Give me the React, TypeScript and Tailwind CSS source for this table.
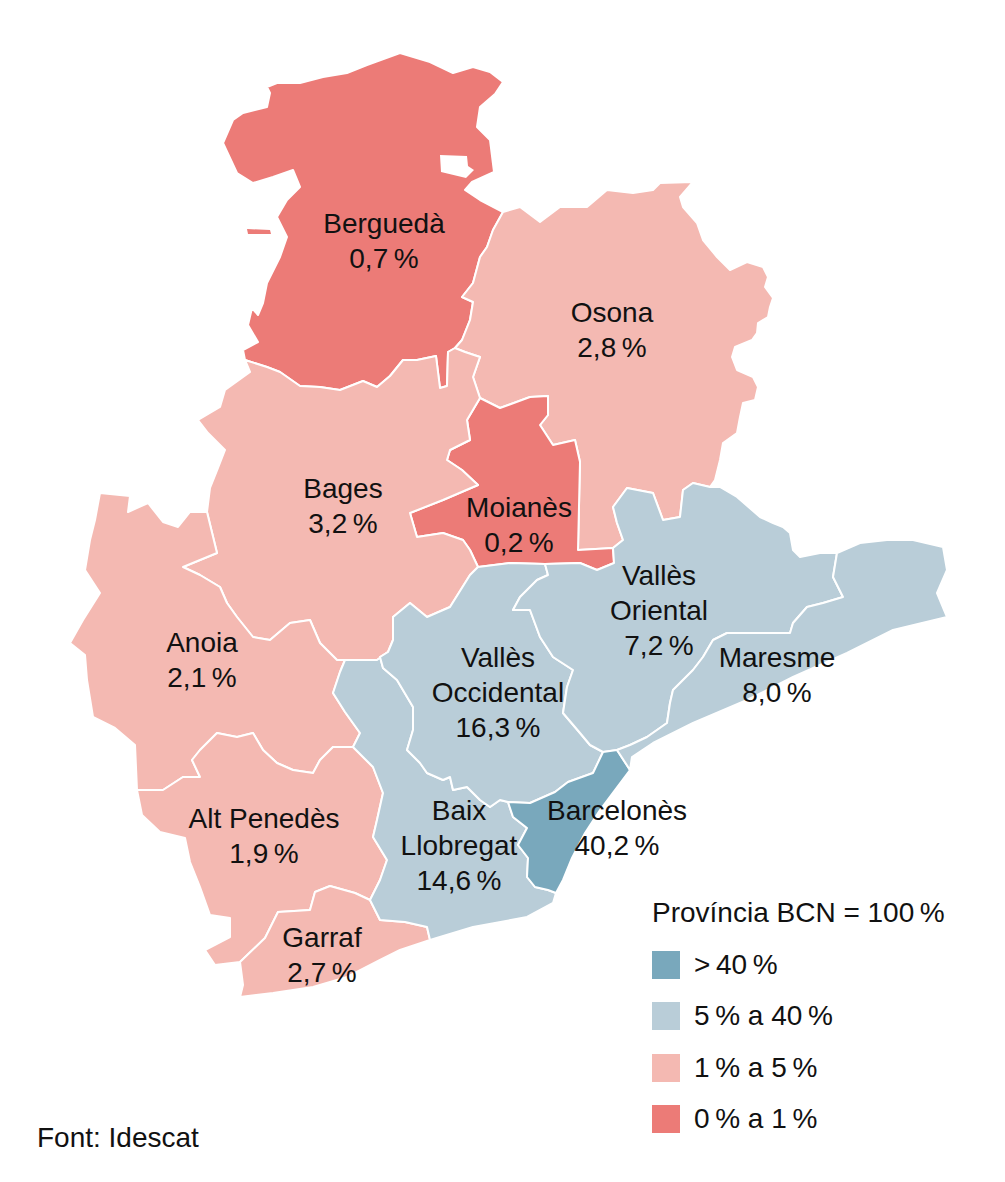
type P = [number, number];

const rev = (s: P[]) => [...s].reverse();
const join = (...segs: P[][]) => {
  const out: P[] = [];
  segs.forEach((s) =>
    s.forEach((p, i) => {
      const last = out[out.length - 1];
      if (i === 0 && last && last[0] === p[0] && last[1] === p[1]) return;
      out.push(p);
    })
  );
  return out.map((p) => p.join(",")).join(" ");
};

// boundary segments between comarques (shared so borders line up)
const BE_OUT: P[] = [[245,360],[243,350],[258,342],[248,325],[252,308],[258,315],[263,303],[267,283],[280,257],[287,237],[277,217],[287,200],[300,187],[293,170],[273,177],[253,183],[237,173],[223,143],[233,120],[243,113],[267,107],[270,93],[267,87],[277,83],[300,83],[323,77],[347,73],[367,65],[400,53],[430,62],[453,73],[473,67],[490,72],[503,82],[495,94],[480,107],[477,127],[490,140],[494,172],[472,182],[465,190],[480,200],[503,212]];
const B_O: P[] = [[503,212],[493,230],[487,247],[480,257],[473,283],[462,297],[473,302],[470,320],[462,340],[455,348]];
const BE_BA: P[] = [[455,348],[448,352],[447,386],[440,388],[436,356],[417,360],[403,360],[390,376],[377,387],[363,381],[340,390],[320,387],[300,386],[280,372],[267,367],[245,360]];
const OS_OUT: P[] = [[503,212],[520,207],[540,222],[560,207],[587,207],[607,190],[633,193],[653,190],[660,183],[693,182],[680,197],[683,207],[697,223],[703,240],[717,257],[730,270],[747,262],[763,267],[768,277],[765,287],[773,298],[770,307],[768,317],[758,323],[757,333],[752,340],[735,347],[732,357],[737,370],[753,377],[758,387],[755,400],[743,403],[740,417],[737,433],[723,443],[720,460],[715,480],[710,487]];
const O_VOR: P[] = [[710,487],[693,483],[683,490],[680,517],[663,520],[653,493],[627,488],[613,507],[617,523],[623,540],[613,548]];
const O_BA: P[] = [[455,348],[465,352],[480,357],[473,377],[480,398]];
const MO_OS: P[] = [[480,398],[500,408],[530,397],[548,396],[548,415],[540,425],[553,445],[575,440],[580,462],[578,550],[613,548]];
const MO_VOR: P[] = [[613,548],[614,563],[597,570],[580,563],[545,564]];
const MO_VOCC: P[] = [[545,564],[510,563],[478,567]];
const MO_BA: P[] = [[478,567],[470,550],[463,540],[443,533],[417,537],[410,513],[443,500],[478,485],[462,470],[447,460],[450,450],[470,440],[467,420],[480,398]];
const BA_VOCC: P[] = [[478,567],[470,575],[450,607],[427,617],[410,603],[393,617],[393,640],[388,652]];
const BA_BL: P[] = [[388,652],[377,660],[345,660]];
const BA_AN: P[] = [[345,660],[337,660],[327,650],[320,643],[310,620],[290,623],[270,640],[253,637],[237,617],[227,603],[220,587],[200,575],[183,567],[217,553],[207,512]];
const BA_OUT: P[] = [[207,512],[210,488],[218,468],[225,450],[208,433],[198,420],[220,407],[225,390],[250,372],[245,360]];
const AN_OUT: P[] = [[207,512],[190,512],[178,527],[163,522],[148,503],[128,512],[130,496],[100,493],[95,520],[90,540],[85,570],[100,593],[83,620],[70,643],[85,655],[87,680],[93,717],[115,728],[135,745],[137,790]];
const AN_ALTP: P[] = [[137,790],[163,790],[183,777],[200,777],[192,760],[200,750],[217,733],[237,737],[253,733],[263,750],[277,763],[293,770],[313,773],[320,760],[333,747],[353,747]];
const AN_BL: P[] = [[353,747],[360,733],[345,712],[333,693],[340,672],[345,660]];
const ALTP_BL: P[] = [[353,747],[373,767],[383,793],[377,820],[373,837],[387,860],[380,880],[370,900]];
const ALTP_GAR: P[] = [[370,900],[355,893],[330,886],[315,892],[310,910],[278,912],[265,938],[240,962]];
const ALTP_OUT: P[] = [[240,962],[215,965],[205,950],[230,937],[230,918],[210,915],[200,887],[190,862],[185,838],[160,832],[142,815],[137,790]];
const GAR_BL: P[] = [[370,900],[380,920],[405,922],[427,927],[430,940]];
const GAR_COAST: P[] = [[430,940],[400,950],[380,960],[347,977],[313,987],[273,993],[240,997],[243,985],[240,962]];
const BL_COAST: P[] = [[430,940],[473,927],[527,917],[553,903],[556,893]];
const BL_BARC: P[] = [[556,893],[548,890],[535,887],[527,877],[528,858],[518,845],[527,828],[513,817],[508,802]];
const BL_VOCC: P[] = [[508,802],[500,800],[490,807],[480,800],[467,787],[453,790],[450,777],[443,780],[427,773],[420,763],[407,750],[413,730],[413,707],[397,680],[383,668],[380,657],[388,652]];
const BARC_VOCC: P[] = [[508,802],[530,803],[555,792],[568,782],[593,773],[603,752]];
const VOCC_VOR: P[] = [[545,564],[548,575],[537,580],[520,597],[513,610],[530,610],[540,637],[553,657],[573,670],[567,687],[563,713],[580,733],[590,745],[603,752]];
const BARC_VOR: P[] = [[603,752],[617,750]];
const VOR_OUT: P[] = [[710,487],[720,487],[737,497],[760,517],[773,523],[783,527],[790,533],[793,550],[800,557],[820,553],[837,553]];
const VOR_MAR: P[] = [[837,553],[833,577],[843,597],[823,603],[807,607],[793,623],[790,633],[767,633],[747,633],[727,633],[713,640],[703,657],[693,670],[673,690],[670,703],[667,723],[647,737],[630,745],[617,750]];
const MAR_OUT: P[] = [[837,553],[860,543],[887,540],[913,540],[943,547],[947,570],[937,593],[947,617],[893,630],[847,653],[793,677],[747,700],[693,723],[653,743],[632,757],[630,770]];
const BARC_MAR: P[] = [[617,750],[630,770]];
const BARC_COAST: P[] = [[630,770],[615,790],[600,810],[585,833],[572,858],[563,880],[556,893]];

const DARK_RED = "#ec7b77";
const PINK = "#f4b9b2";
const LIGHT_BLUE = "#b9cdd8";
const DARK_BLUE = "#79a8bc";

const regions = [
  { name: "Berguedà", fill: DARK_RED, points: join(BE_OUT, B_O, BE_BA) },
  { name: "Osona", fill: PINK, points: join(OS_OUT, O_VOR, rev(MO_OS), rev(O_BA), rev(B_O)) },
  { name: "Moianès", fill: DARK_RED, points: join(MO_OS, MO_VOR, MO_VOCC, MO_BA) },
  { name: "Bages", fill: PINK, points: join(rev(BE_BA), O_BA, rev(MO_BA), BA_VOCC, BA_BL, BA_AN, BA_OUT) },
  { name: "Anoia", fill: PINK, points: join(AN_OUT, AN_ALTP, AN_BL, BA_AN) },
  { name: "Alt Penedès", fill: PINK, points: join(ALTP_BL, ALTP_GAR, ALTP_OUT, AN_ALTP) },
  { name: "Garraf", fill: PINK, points: join(GAR_BL, GAR_COAST, rev(ALTP_GAR)) },
  { name: "Baix Llobregat", fill: LIGHT_BLUE, points: join(rev(BA_BL), rev(BL_VOCC), rev(BL_BARC), rev(BL_COAST), rev(GAR_BL), rev(ALTP_BL), AN_BL) },
  { name: "Vallès Occidental", fill: LIGHT_BLUE, points: join(rev(MO_VOCC), VOCC_VOR, rev(BARC_VOCC), BL_VOCC, rev(BA_VOCC)) },
  { name: "Vallès Oriental", fill: LIGHT_BLUE, points: join(rev(O_VOR), VOR_OUT, VOR_MAR, rev(BARC_VOR), rev(VOCC_VOR), rev(MO_VOR)) },
  { name: "Barcelonès", fill: DARK_BLUE, points: join(BARC_VOCC, BARC_VOR, BARC_MAR, BARC_COAST, BL_BARC) },
  { name: "Maresme", fill: LIGHT_BLUE, points: join(MAR_OUT, rev(BARC_MAR), rev(VOR_MAR)) },
];

const labels: { x: number; y: number; lines: string[] }[] = [
  { x: 384, y: 233, lines: ["Berguedà", "0,7\u202F%"] },
  { x: 612, y: 322, lines: ["Osona", "2,8\u202F%"] },
  { x: 343, y: 498, lines: ["Bages", "3,2\u202F%"] },
  { x: 519, y: 517, lines: ["Moianès", "0,2\u202F%"] },
  { x: 202, y: 652, lines: ["Anoia", "2,1\u202F%"] },
  { x: 659, y: 585, lines: ["Vallès", "Oriental", "7,2\u202F%"] },
  { x: 777, y: 667, lines: ["Maresme", "8,0\u202F%"] },
  { x: 498, y: 667, lines: ["Vallès", "Occidental", "16,3\u202F%"] },
  { x: 459, y: 820, lines: ["Baix", "Llobregat", "14,6\u202F%"] },
  { x: 617, y: 820, lines: ["Barcelonès", "40,2\u202F%"] },
  { x: 264, y: 828, lines: ["Alt Penedès", "1,9\u202F%"] },
  { x: 322, y: 947, lines: ["Garraf", "2,7\u202F%"] },
];

const legend = [
  { color: DARK_BLUE, label: ">\u202F40\u202F%" },
  { color: LIGHT_BLUE, label: "5\u202F% a 40\u202F%" },
  { color: PINK, label: "1\u202F% a 5\u202F%" },
  { color: DARK_RED, label: "0\u202F% a 1\u202F%" },
];

export default function App() {
  return (
    <div className="relative flex h-[1182px] w-[1005px] flex-col bg-white font-['Liberation_Sans',Arial,sans-serif] text-[28px] leading-[34px] text-[#111]">
      <svg width="1005" height="1121" viewBox="0 0 1005 1121" className="block shrink-0">
        {regions.map((r) => (
          <polygon
            key={r.name}
            points={r.points}
            fill={r.fill}
            stroke="#fff"
            strokeWidth={2}
            strokeLinejoin="round"
          />
        ))}
        {/* enclave and islet around Berguedà */}
        <polygon points="440,155 467,156 468,166 474,170 466,178 441,172" fill="#fff" />
        <polygon points="247,229 270,230 271,234 248,234" fill={DARK_RED} />
        {labels.map((l) => (
          <text key={l.lines[0] + l.x} x={l.x} textAnchor="middle" fontSize={28} fill="#111">
            {l.lines.map((line, i) => (
              <tspan key={i} x={l.x} y={l.y + i * 35}>
                {line}
              </tspan>
            ))}
          </text>
        ))}
      </svg>

      <div className="absolute left-[652px] top-[896px] flex flex-col gap-[17.5px]">
        <div>Província BCN = 100{"\u202F"}%</div>
        {legend.map((item) => (
          <div key={item.label} className="flex items-center gap-[14px]">
            <span className="h-[28px] w-[28px] shrink-0" style={{ backgroundColor: item.color }} />
            <span>{item.label}</span>
          </div>
        ))}
      </div>

      <p className="pl-[37px]">Font: Idescat</p>
    </div>
  );
}
